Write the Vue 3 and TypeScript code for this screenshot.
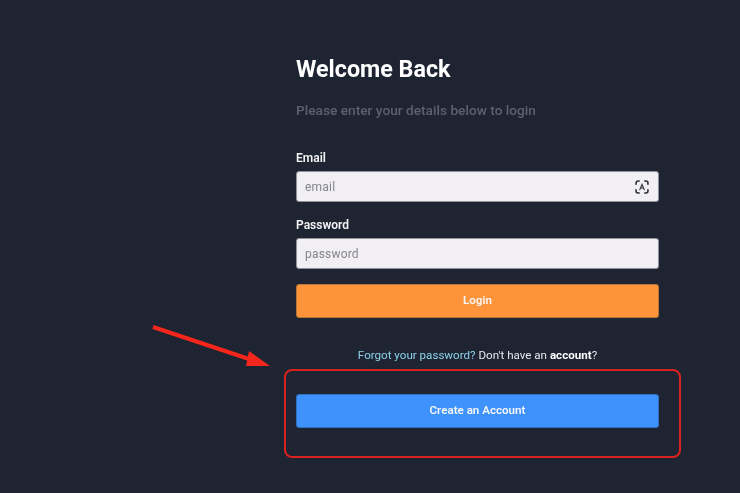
<script setup lang="ts">
const title: string = 'Welcome Back'
</script>

<template>
  <main class="page">
    <section class="form">
      <h1 class="title">{{ title }}</h1>
      <p class="subtitle">Please enter your details below to login</p>
      <label class="label label-email">Email</label>
      <div class="field">
        <span class="placeholder">email</span>
        <svg class="scan" viewBox="0 0 16 16" width="14" height="14" fill="none" stroke="#2a2c33" stroke-width="1.800" stroke-linecap="round">
          <path d="M1.200 4.800V3.500a2.300 2.300 0 0 1 2.300-2.300H4.800" />
          <path d="M11.200 1.200h1.300a2.300 2.300 0 0 1 2.300 2.300v1.300" />
          <path d="M1.200 11.200v1.300a2.300 2.300 0 0 0 2.300 2.300H4.800" />
          <path d="M11.200 14.800h1.300a2.300 2.300 0 0 0 2.300-2.300v-1.300" />
          <path d="M5.500 11 8 5l2.500 6M6.400 9.200h3.200" stroke-width="1.300" />
        </svg>
      </div>
      <label class="label label-password">Password</label>
      <div class="field">
        <span class="placeholder">password</span>
      </div>
      <button class="btn btn-login" type="button">Login</button>
      <p class="links"><span class="forgot">Forgot your password?</span> Don't have an <strong>account</strong>?</p>
      <button class="btn btn-create" type="button">Create an Account</button>
    </section>

    <div class="highlight"></div>
    <svg class="arrow" viewBox="0 0 130 60" width="130" height="60">
      <path d="M2 2 L98 34" stroke="#f5261b" stroke-width="4" fill="none" />
      <path d="M98 26 L119 41 L95 41 Z" fill="#f5261b" />
    </svg>
  </main>
</template>

<style>
html,
body {
  background: #1f2433;
}
</style>

<style scoped>
.page {
  position: relative;
  width: 740px;
  height: 493px;
  overflow: hidden;
  background: #1f2433;
  font-family: Roboto, "Liberation Sans", sans-serif;
  filter: blur(0.35px);
}
.form {
  display: flex;
  flex-direction: column;
  width: 363px;
  margin-left: 296px;
  padding-top: 55px;
}
.title {
  margin: 0;
  font-size: 23.300px;
  line-height: 28px;
  font-weight: 700;
  color: #ffffff;
}
.subtitle {
  margin: 18px 0 0;
  font-size: 13.700px;
  line-height: 18px;
  font-weight: 500;
  color: #5d616d;
}
.label {
  font-size: 12px;
  line-height: 16px;
  font-weight: 600;
  color: #f4f4f6;
}
.label-email {
  margin-top: 31px;
  margin-bottom: 5px;
}
.label-password {
  margin-top: 15px;
  margin-bottom: 5px;
}
.field {
  display: flex;
  align-items: center;
  justify-content: space-between;
  height: 31px;
  box-sizing: border-box;
  padding: 0 9px 0 8px;
  background: #f1eff4;
  border: 1px solid #8f919b;
  border-radius: 3px;
}
.placeholder {
  font-size: 12px;
  color: #85858c;
  letter-spacing: 0.2px;
}
.scan {
  flex: none;
}
.btn {
  display: block;
  width: 100%;
  height: 34px;
  padding: 0 0 2px;
  border: none;
  border-radius: 3px;
  font-family: inherit;
  font-size: 11.600px;
  font-weight: 600;
  color: #f6f6f8;
}
.btn-login {
  margin-top: 15px;
  background: #fd9439;
  border: 1px solid #b87438;
}
.links {
  margin: 29px 0 0;
  font-size: 11.600px;
  line-height: 16px;
  text-align: center;
  color: #e6e7ea;
}
.links strong {
  font-weight: 700;
  color: #ffffff;
}
.forgot {
  color: #8cd3ea;
}
.btn-create {
  margin-top: 31px;
  background: #3e92fb;
  border: 1px solid #2f6fbd;
}
.highlight {
  position: absolute;
  left: 284px;
  top: 369px;
  width: 397px;
  height: 89px;
  box-sizing: border-box;
  border: 2.500px solid #d9211e;
  border-radius: 8px;
}
.arrow {
  position: absolute;
  left: 151px;
  top: 325px;
}
</style>
